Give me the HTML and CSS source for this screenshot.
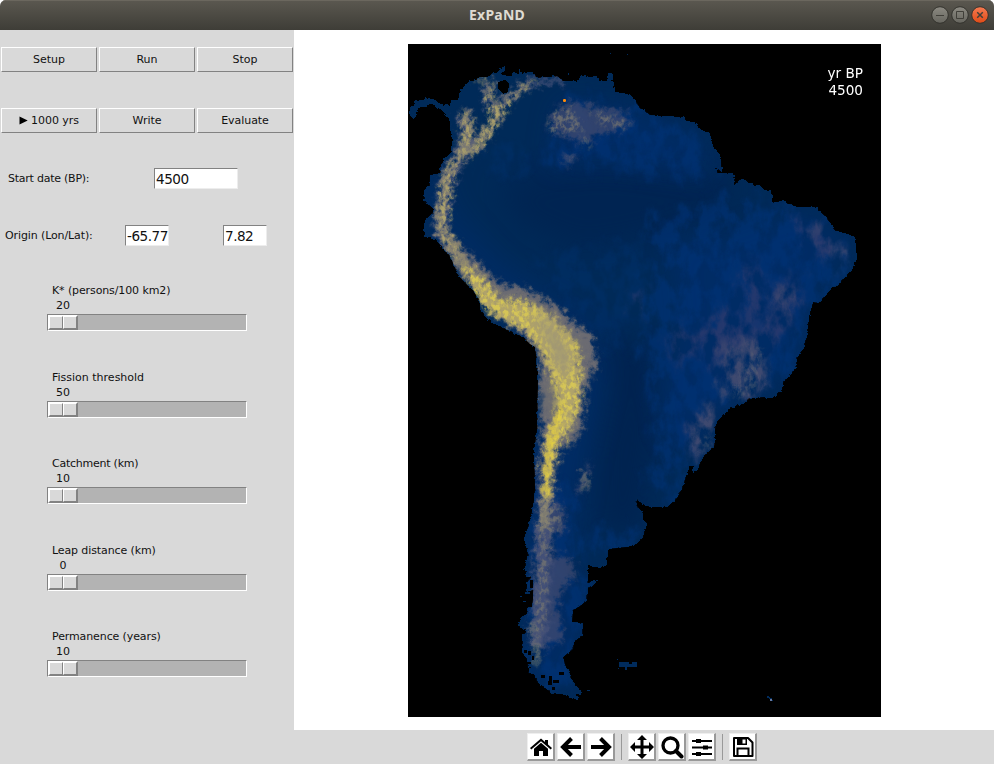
FILE: index.html
```html
<!DOCTYPE html>
<html lang="en">
<head>
<meta charset="utf-8">
<title>ExPaND</title>
<link rel="stylesheet" href="styles.css">
</head>
<body>
<div class="window">
  <header class="titlebar">
    <h1>ExPaND</h1>
    <div class="controls">
      <svg width="60" height="20" viewBox="0 0 60 20">
        <defs>
          <linearGradient id="gr" x2="0" y2="1"><stop stop-color="#8c8a82"/><stop offset="1" stop-color="#66655e"/></linearGradient>
          <linearGradient id="or" x2="0" y2="1"><stop stop-color="#f57b52"/><stop offset="1" stop-color="#df4a16"/></linearGradient>
        </defs>
        <g stroke="#34332e"><circle cx="10" cy="10" r="8.3" fill="url(#gr)"/><circle cx="30" cy="10" r="8.3" fill="url(#gr)"/><circle cx="50" cy="10" r="8.3" fill="url(#or)"/></g>
        <g fill="none" stroke="#403f39"><path d="M6 10.500h8"/><path d="M26.500 6.500h7v7h-7z"/><path d="M47.200 7.200l5.600 5.600M52.800 7.200l-5.600 5.600" stroke-width="1.500"/></g>
      </svg>
    </div>
  </header>
  <main class="content">
    <section class="panel">
      <div class="buttons"><button>Setup</button><button>Run</button><button>Stop</button></div>
      <div class="buttons second"><button><svg class="play" width="9" height="9" viewBox="0 0 9 9"><path d="M.500 .500L8.700 4.500L.500 8.500z"/></svg>1000 yrs</button><button>Write</button><button>Evaluate</button></div>
      <div class="field start"><label class="tight">Start date (BP):</label><input class="wide" value="4500"></div>
      <div class="field origin"><label class="snug">Origin (Lon/Lat):</label><input value="-65.77"><input value="7.82"></div>
      <div class="scales">
        <div class="scale"><span class="snug">K* (persons/100 km2)</span><output>20</output><div class="trough"><div class="thumb"><i></i><i></i></div></div></div>
        <div class="scale"><span>Fission threshold</span><output>50</output><div class="trough"><div class="thumb"><i></i><i></i></div></div></div>
        <div class="scale"><span class="tight">Catchment (km)</span><output>10</output><div class="trough"><div class="thumb"><i></i><i></i></div></div></div>
        <div class="scale"><span class="snug">Leap distance (km)</span><output>0</output><div class="trough"><div class="thumb"><i></i><i></i></div></div></div>
        <div class="scale"><span class="snug">Permanence (years)</span><output>10</output><div class="trough"><div class="thumb"><i></i><i></i></div></div></div>
      </div>
    </section>
    <section class="figure">
      <svg class="map" width="473" height="673" viewBox="408 44 473 673">
        <defs>
          <path id="coast" d="M409 112L410 108L415 102L420 100L427 98L433 99L438 102L444 105L450 106L452 100L458 100L460 91L463 87L470 81L476 80L480 77L488 77L492 73L497 72L499 69L506 66L505 71L500 74L506 76L513 76L513 72L519 74L519 69L521 73L533 72L537 78L557 76L563 81L577 81L583 74L588 77L597 76L600 81L607 81L608 77L608 73L612 73L613 77L611 81L614 84L615 92L623 93L630 95L635 100L640 108L645 111L652 116L683 117L688 121L697 123L699 128L704 131L710 134L713 147L718 153L721 160L722 172L716 169L718 173L733 173L735 180L734 185L740 179L748 180L750 184L761 186L764 190L772 192L772 202L777 202L783 200L788 204L797 207L815 207L820 211L827 218L835 230L843 233L855 237L856 251L857 255L855 265L847 275L838 285L832 287L825 296L818 303L813 302L809 317L807 337L803 349L797 358L796 367L790 375L783 383L782 391L772 398L750 398L743 404L730 408L717 422L715 430L715 445L708 452L702 458L699 467L692 475L694 466L689 467L686 477L682 489L677 498L667 507L650 507L643 504L636 499L637 506L643 513L643 520L647 523L643 538L636 544L627 547L608 549L607 565L600 568L588 565L588 583L597 579L595 585L588 588L587 600L580 606L573 610L572 622L583 624L583 635L574 642L573 649L563 657L566 668L569 671L572 682L583 692L577 695L578 699L569 698L568 695L552 693L537 682L534 674L528 673L531 667L528 668L527 659L522 652L522 635L527 631L519 627L518 625L521 617L527 614L527 608L532 607L533 599L533 590L526 592L528 580L532 577L526 577L525 563L528 555L526 544L524 538L530 522L534 500L535 489L534 450L537 430L538 380L538 372L535 347L530 344L523 337L503 328L488 320L480 310L480 302L473 290L464 282L458 275L451 258L443 248L437 241L430 238L424 237L424 227L425 220L433 212L434 209L424 202L424 190L429 186L430 175L440 173L440 165L448 155L451 153L452 140L450 130L450 122L446 115L442 110L438 108L430 104L425 107L420 107L416 111L416 116L413 119L410 115Z"/>
          <clipPath id="land"><use href="#coast"/></clipPath>
          <filter id="jag" x="408" y="44" width="473" height="673" filterUnits="userSpaceOnUse">
            <feTurbulence type="fractalNoise" baseFrequency=".28" numOctaves="2" seed="8"/>
            <feDisplacementMap in="SourceGraphic" scale="4" xChannelSelector="R" yChannelSelector="G"/>
          </filter>
          <filter id="rough" x="408" y="44" width="473" height="673" filterUnits="userSpaceOnUse" color-interpolation-filters="sRGB">
            <feGaussianBlur in="SourceGraphic" stdDeviation="2.400" result="b"/>
            <feTurbulence type="fractalNoise" baseFrequency=".15" numOctaves="4" seed="4" result="n"/>
            <feDisplacementMap in="b" in2="n" scale="17" xChannelSelector="R" yChannelSelector="G"/>
            <feGaussianBlur stdDeviation=".6"/>
          </filter>
          <filter id="cloud" x="408" y="44" width="473" height="673" filterUnits="userSpaceOnUse" color-interpolation-filters="sRGB">
            <feGaussianBlur in="SourceGraphic" stdDeviation="5" result="b"/>
            <feTurbulence type="fractalNoise" baseFrequency=".07 .045" numOctaves="5" seed="12" result="n"/>
            <feColorMatrix in="n" values="0 0 0 0 1 0 0 0 0 1 0 0 0 0 1 3.500 0 0 0 -1.150" result="m"/>
            <feDisplacementMap in="b" in2="n" scale="34" xChannelSelector="G" yChannelSelector="B" result="d"/>
            <feComposite in="d" in2="m" operator="in"/>
          </filter>
          <filter id="grain" x="408" y="44" width="473" height="673" filterUnits="userSpaceOnUse" color-interpolation-filters="sRGB">
            <feGaussianBlur in="SourceGraphic" stdDeviation="2.500" result="b"/>
            <feTurbulence type="fractalNoise" baseFrequency=".24 .18" numOctaves="3" seed="23" result="n"/>
            <feColorMatrix in="n" values="0 0 0 0 1 0 0 0 0 1 0 0 0 0 1 0 3.800 0 0 -1.500" result="m"/>
            <feDisplacementMap in="b" in2="n" scale="12" xChannelSelector="R" yChannelSelector="B" result="d"/>
            <feComposite in="d" in2="m" operator="in"/>
            <feGaussianBlur stdDeviation=".4"/>
          </filter>
          <filter id="soft" x="-50%" y="-50%" width="200%" height="200%" color-interpolation-filters="sRGB"><feGaussianBlur stdDeviation="14"/></filter>
          <filter id="haze" x="-50%" y="-50%" width="200%" height="200%" color-interpolation-filters="sRGB"><feGaussianBlur stdDeviation="5"/></filter>
        </defs>
        <path d="M408 44h473v673H408z"/>
        <g filter="url(#jag)"><use href="#coast" fill="#002959" shape-rendering="crispEdges"/></g>
        <g clip-path="url(#land)">
          <g filter="url(#soft)" fill="#002350">
            <path d="M500 185L530 175L600 165L740 180L720 215L640 240L580 250L520 225z" opacity=".75"/>
            <path d="M605 340L645 340L655 430L640 535L600 530L600 450L612 400z"/>
          </g>
          <g filter="url(#soft)" fill="#00307a" opacity=".4">
            <path d="M670 240L730 240L800 210L850 240L810 300L795 370L715 410L700 455L670 440L660 390L680 320zM560 100L640 110L700 140L710 175L610 160L550 165z"/>
            <path d="M420 190L440 165L450 210L500 265L590 320L605 370L590 440L565 560L585 620L560 690L530 680L530 500L535 350L450 250z"/>
          </g>
          <g filter="url(#cloud)">
            <path fill="#003478" opacity=".6" d="M650 220L725 200L790 205L850 235L845 280L810 310L795 375L715 410L700 460L650 500L655 420L640 340zM570 95L640 108L700 140L710 180L650 175L540 160z"/>
            <path fill="#003478" opacity=".3" d="M480 150L540 150L525 180L490 175zM530 260L640 240L650 300L610 350L570 300z"/>
            <path fill="#003478" opacity=".6" d="M530 490L570 480L590 600L570 690L530 680zM590 525L640 530L630 545L590 550zM665 485L690 490L665 506z"/>
            <path fill="#2b3b6d" opacity=".85" d="M742 265L762 268L762 320L745 320zM775 285L800 275L790 325L765 350L760 390L745 398L725 385L705 350L690 340L710 325L725 300L740 320L765 325zM795 210L812 225L840 240L845 262L818 250L800 235zM690 415L715 405L715 440L702 460L685 435zM670 335L700 325L700 350L675 360zM625 300L650 292L640 312z"/>
            <path fill="#414b70" opacity=".9" d="M720 345L765 335L765 385L738 402L720 380zM695 410L716 412L714 438L700 460L690 435zM778 290L790 285L785 310L778 320zM805 225L815 230L812 255zM825 240L845 250L840 265z"/>
          </g>
          <g filter="url(#rough)">
            <path fill="#404b70" d="M554 109L574 102L600 108L625 112L632 125L610 132L592 138L580 143L560 134L548 128zM536 565L548 558L566 555L578 572L565 585L556 605L560 615L562 640L548 645L535 650L535 600z" opacity=".75"/>
            <path fill="#404b70" opacity=".8" d="M578 488L588 460L590 470L582 495zM545 510L562 502L565 530L556 535zM563 155L578 157L565 166zM690 75L700 75z"/>
            <g fill="none" stroke="#435077" stroke-linejoin="round" stroke-linecap="round">
              <path stroke-width="13" d="M465 117L468 140L455 165L446 182L444 205L440 227L453 250L476 280L496 300"/>
              <path stroke-width="8" d="M489 84L488 100L499 115L485 135L467 155M502 103L526 84"/>
              <path stroke-width="5" d="M526 84L565 79"/>
              <path stroke-width="16" d="M549 440L546 490L544 540L541 590L538 640"/>
            </g>
            <path fill="#6b6b72" d="M450 235L475 260L500 285L520 287L545 298L568 316L592 337L595 368L585 390L583 425L572 445L558 450L552 500L542 500L542 440L541 400L539 355L525 337L500 320L485 308L468 285L446 250z"/>
            <g fill="none" stroke="#938b70" stroke-linejoin="round" stroke-linecap="round">
              <path stroke-width="6" d="M465 115L470 133L463 151L454 165L446 178L444 202L439 223L448 242L468 268L490 294"/>
              <path stroke-width="6" d="M499 113L490 126L480 143"/>
              <path stroke-width="3" d="M490 82L488 96L501 114L488 128L480 143L466 156M504 101L526 84M478 80L484 80"/>
              <path stroke-width="8" d="M552 440L548 470L546 505L544 525"/>
            </g>
            <path fill="#b0a36a" d="M463 268L483 280L500 300L520 302L540 308L562 326L579 346L579 395L572 425L557 442L551 480L545 480L545 440L556 411L553 385L542 350L525 330L495 316L480 302z"/>
          </g>
          <g filter="url(#grain)">
            <path fill="#dccb53" d="M462 260L486 280L502 300L523 297L544 311L559 329L579 345L582 375L580 405L565 440L552 460L550 498L543 498L547 445L556 420L553 390L542 348L526 331L500 317L484 307L467 282z" opacity=".85"/>
            <path fill="#b4a76c" opacity=".9" d="M462 110L474 120L472 140L455 170L450 205L448 230L465 257L455 260L438 230L438 195L446 172L460 150zM490 85L495 84L492 99L501 105L527 82L540 80L520 93L503 114L495 130L480 150L467 158L480 135L490 123L486 100zM480 78L487 78L484 83L478 80z"/>
            <path fill="#7a7870" opacity=".75" d="M551 115L570 105L582 130L560 132L549 132zM588 110L625 120L631 126L604 126zM580 132L592 148L583 145zM541 500L560 510L560 530L550 530L545 620L536 640L538 570zM534 655L537 625L540 625L538 665z"/>
            <path fill="#686b76" opacity=".4" d="M755 348L763 350L755 392L730 398zM705 435L714 438L702 455zM566 155L580 155L566 165zM585 350L600 350L594 375zM580 480L588 465L585 490z"/>
          </g>
          <path filter="url(#haze)" fill="#a09774" opacity=".95" d="M533 313L548 320L562 338L571 355L569 375L560 374L551 352z"/>
          <path filter="url(#haze)" fill="#6d6d70" opacity=".8" d="M541 380L552 385L557 400L550 412L542 412z"/>
          <path filter="url(#rough)" fill="none" stroke="#f1d931" stroke-width="3" d="M560 405L554 434L550 446L546 462L547 493"/>
          <path filter="url(#rough)" fill="none" stroke="#aaa071" stroke-width="2" d="M533 622V633M536 640V664M586 472L586 488"/>
        </g>
        <g shape-rendering="crispEdges">
          <path d="M498 82L505 80L509 84L508 92L503 94L498 89zM541 675h4v3h-4zM549 676h3v9h-3zM553 680h6v3h-6zM524 650h3v3h-3zM528 651h3v4h-3zM532 656h2v4h-2zM552 687h3v3h-3zM559 672h5v3h-5zM527 662h4v2h-4zM548 681h2v4h-2zM530 580h3v8h-3z"/>
          <path fill="#002b5c" d="M619 662h10v2h3v-2h5v5h-10v3h-2v-3h-6zM617 659h1v1h-1zM618 668h1v1h-1zM568 73h1v2h-1zM610 53h1v1h-1zM627 54h1v1h-1zM525 592h5v2h-5zM520 596h2v1h-2zM523 601h3v1h-3zM587 690h3v1h-3zM576 698h2v2h-2zM767 696h2v1h1v1h2v2h1v1h-3v-2h-1v-1h-2z"/>
          <path fill="#69799d" d="M770 699h2v2h-2z"/>
          <path fill="#fb8b08" d="M563 100h3v1h-3zM564 99h1v3h-1z"/>
          <path fill="#b56a22" d="M563 99h1v1h-1zM565 99h1v1h-1zM563 101h1v1h-1zM565 101h1v1h-1z"/>
        </g>
        <text x="845.200" y="78">yr BP</text><text x="845.700" y="95">4500</text>
      </svg>
      <nav class="toolbar">
        <button><svg viewBox="0 0 24 24"><path d="M1 13L12 3.500L16 7V5h3v4.600L23 13L21.700 14.500L12 6.300L2.300 14.500zM5 13.700L12 7.800L19 13.700V21h-5v-5h-4v5H5z"/></svg></button>
        <button><svg viewBox="0 0 24 24"><path d="M12.500 3.500L4 12l8.500 8.500M5 12h17" fill="none" stroke="#000" stroke-width="4"/></svg></button>
        <button><svg viewBox="0 0 24 24"><path d="M11.500 3.500L20 12l-8.500 8.500M19 12H2" fill="none" stroke="#000" stroke-width="4"/></svg></button>
        <span class="sep"></span>
        <button><svg viewBox="0 0 24 24"><path d="M12 0l5 5h-3.500v5.500H19V7l5 5-5 5v-3.500h-5.500V19H17l-5 5-5-5h3.500v-5.500H5V17l-5-5 5-5v3.500h5.500V5H7z"/></svg></button>
        <button><svg viewBox="0 0 24 24"><circle cx="10.500" cy="10.500" r="7.500" fill="none" stroke="#000" stroke-width="3.300"/><path d="M16 16l5.500 5.500" stroke="#000" stroke-width="4" stroke-linecap="round"/></svg></button>
        <button><svg viewBox="0 0 24 24"><path d="M2 6h20M2 12.500h20M2 19h20" stroke="#000" stroke-width="1.800"/><path d="M6 4h5v4H6zM13 10.500h5v4h-5zM6 17h5v4H6z"/></svg></button>
        <span class="sep"></span>
        <button><svg viewBox="0 0 24 24"><path d="M3 3h14l4.500 4.500V21H3z" fill="none" stroke="#000" stroke-width="2" stroke-linejoin="round"/><path d="M6 3h6v7H6zM12 3h4v7h-4z"/><path d="M11.500 4.500h3v4h-3z" fill="#fff"/><path d="M6.500 21v-7.500h11V21" fill="none" stroke="#000" stroke-width="2"/></svg></button>
      </nav>
    </section>
  </main>
</div>
</body>
</html>
```
FILE: styles.css
```css
* { box-sizing: border-box; }
body { margin: 0; background: #fff; font: 11px "DejaVu Sans", sans-serif; color: #111; }
.window { width: 994px; height: 764px; overflow: hidden; border-radius: 6px 6px 0 0; background: #d9d9d9; }
.titlebar { height: 30px; display: grid; grid-template-columns: 1fr auto 1fr; align-items: center; background: linear-gradient(#5b5850, #3e3d37); box-shadow: inset 0 1px #6b675e; }
h1 { grid-column: 2; margin: 0; font: bold 14px/30px "Noto Sans", sans-serif; letter-spacing: .2px; color: #dfdbd2; }
.controls { justify-self: end; height: 20px; padding-right: 4px; }
.controls svg { display: block; }
.content { display: flex; height: 734px; }
.panel { width: 294px; flex: none; padding-top: 17px; }
.buttons { display: grid; grid-template-columns: repeat(3, 96px); gap: 2px; padding-left: 1px; }
.buttons.second { margin-top: 36px; }
button { font: inherit; color: inherit; margin: 0; padding: 0; background: #d9d9d9; border: 1px solid; border-color: #fff #828282 #828282 #fff; }
.buttons button { height: 25px; display: flex; align-items: center; justify-content: center; gap: 3px; padding-bottom: 1px; letter-spacing: -.05px; }
.field { display: flex; align-items: center; height: 21px; }
.start { margin-top: 35px; padding-left: 8px; }
.start label { width: 146px; }
.origin { margin-top: 36px; padding-left: 5px; }
.origin label { width: 120px; }
.origin input + input { margin-left: 54px; }
.tight { letter-spacing: -.24px; }
.snug { letter-spacing: -.11px; }
input { width: 44px; height: 21px; padding: 0 0 0 1px; border: 1px solid; border-color: #828282 #ededed #ededed #828282; border-radius: 0; background: #fff; font: 13.6px "DejaVu Sans", sans-serif; letter-spacing: -.5px; color: #111; }
input.wide { width: 84px; }
.scales { display: flex; flex-direction: column; gap: 38.5px; margin: 37px 0 0 47px; }
.scale { width: 200px; height: 48px; }
.scale span { display: block; height: 15px; line-height: 15px; padding-left: 5px; }
.scale output { display: block; height: 15px; width: 32px; line-height: 15px; text-align: center; }
.trough { height: 17px; margin-top: 1px; border: 1px solid; border-color: #828282 #fff #fff #828282; background: #b3b3b3; }
.thumb { display: flex; width: 30px; height: 15px; border: 1px solid; border-color: #fff #828282 #828282 #fff; background: #d9d9d9; }
.thumb i { width: 14px; height: 13px; border: 1px solid; border-color: #fff #828282 #828282 #fff; }
.figure { width: 700px; background: #fff; display: flex; flex-direction: column; }
.map { display: block; margin: 14px 0 13px 114px; }
.map text { font: 13.6px "DejaVu Sans", sans-serif; fill: #fff; text-anchor: middle; }
.toolbar { height: 34px; background: #d9d9d9; display: flex; gap: 2px; padding: 3px 0 0 233px; }
.toolbar button { width: 28px; height: 28px; display: grid; place-items: center; background: #fff; border-width: 1px 2px 2px 1px; border-color: #eee #999 #999 #eee; }
.toolbar svg { width: 24px; height: 24px; }
.sep { width: 1px; height: 26px; margin: 1px 4px 0; background: #999; }
```
